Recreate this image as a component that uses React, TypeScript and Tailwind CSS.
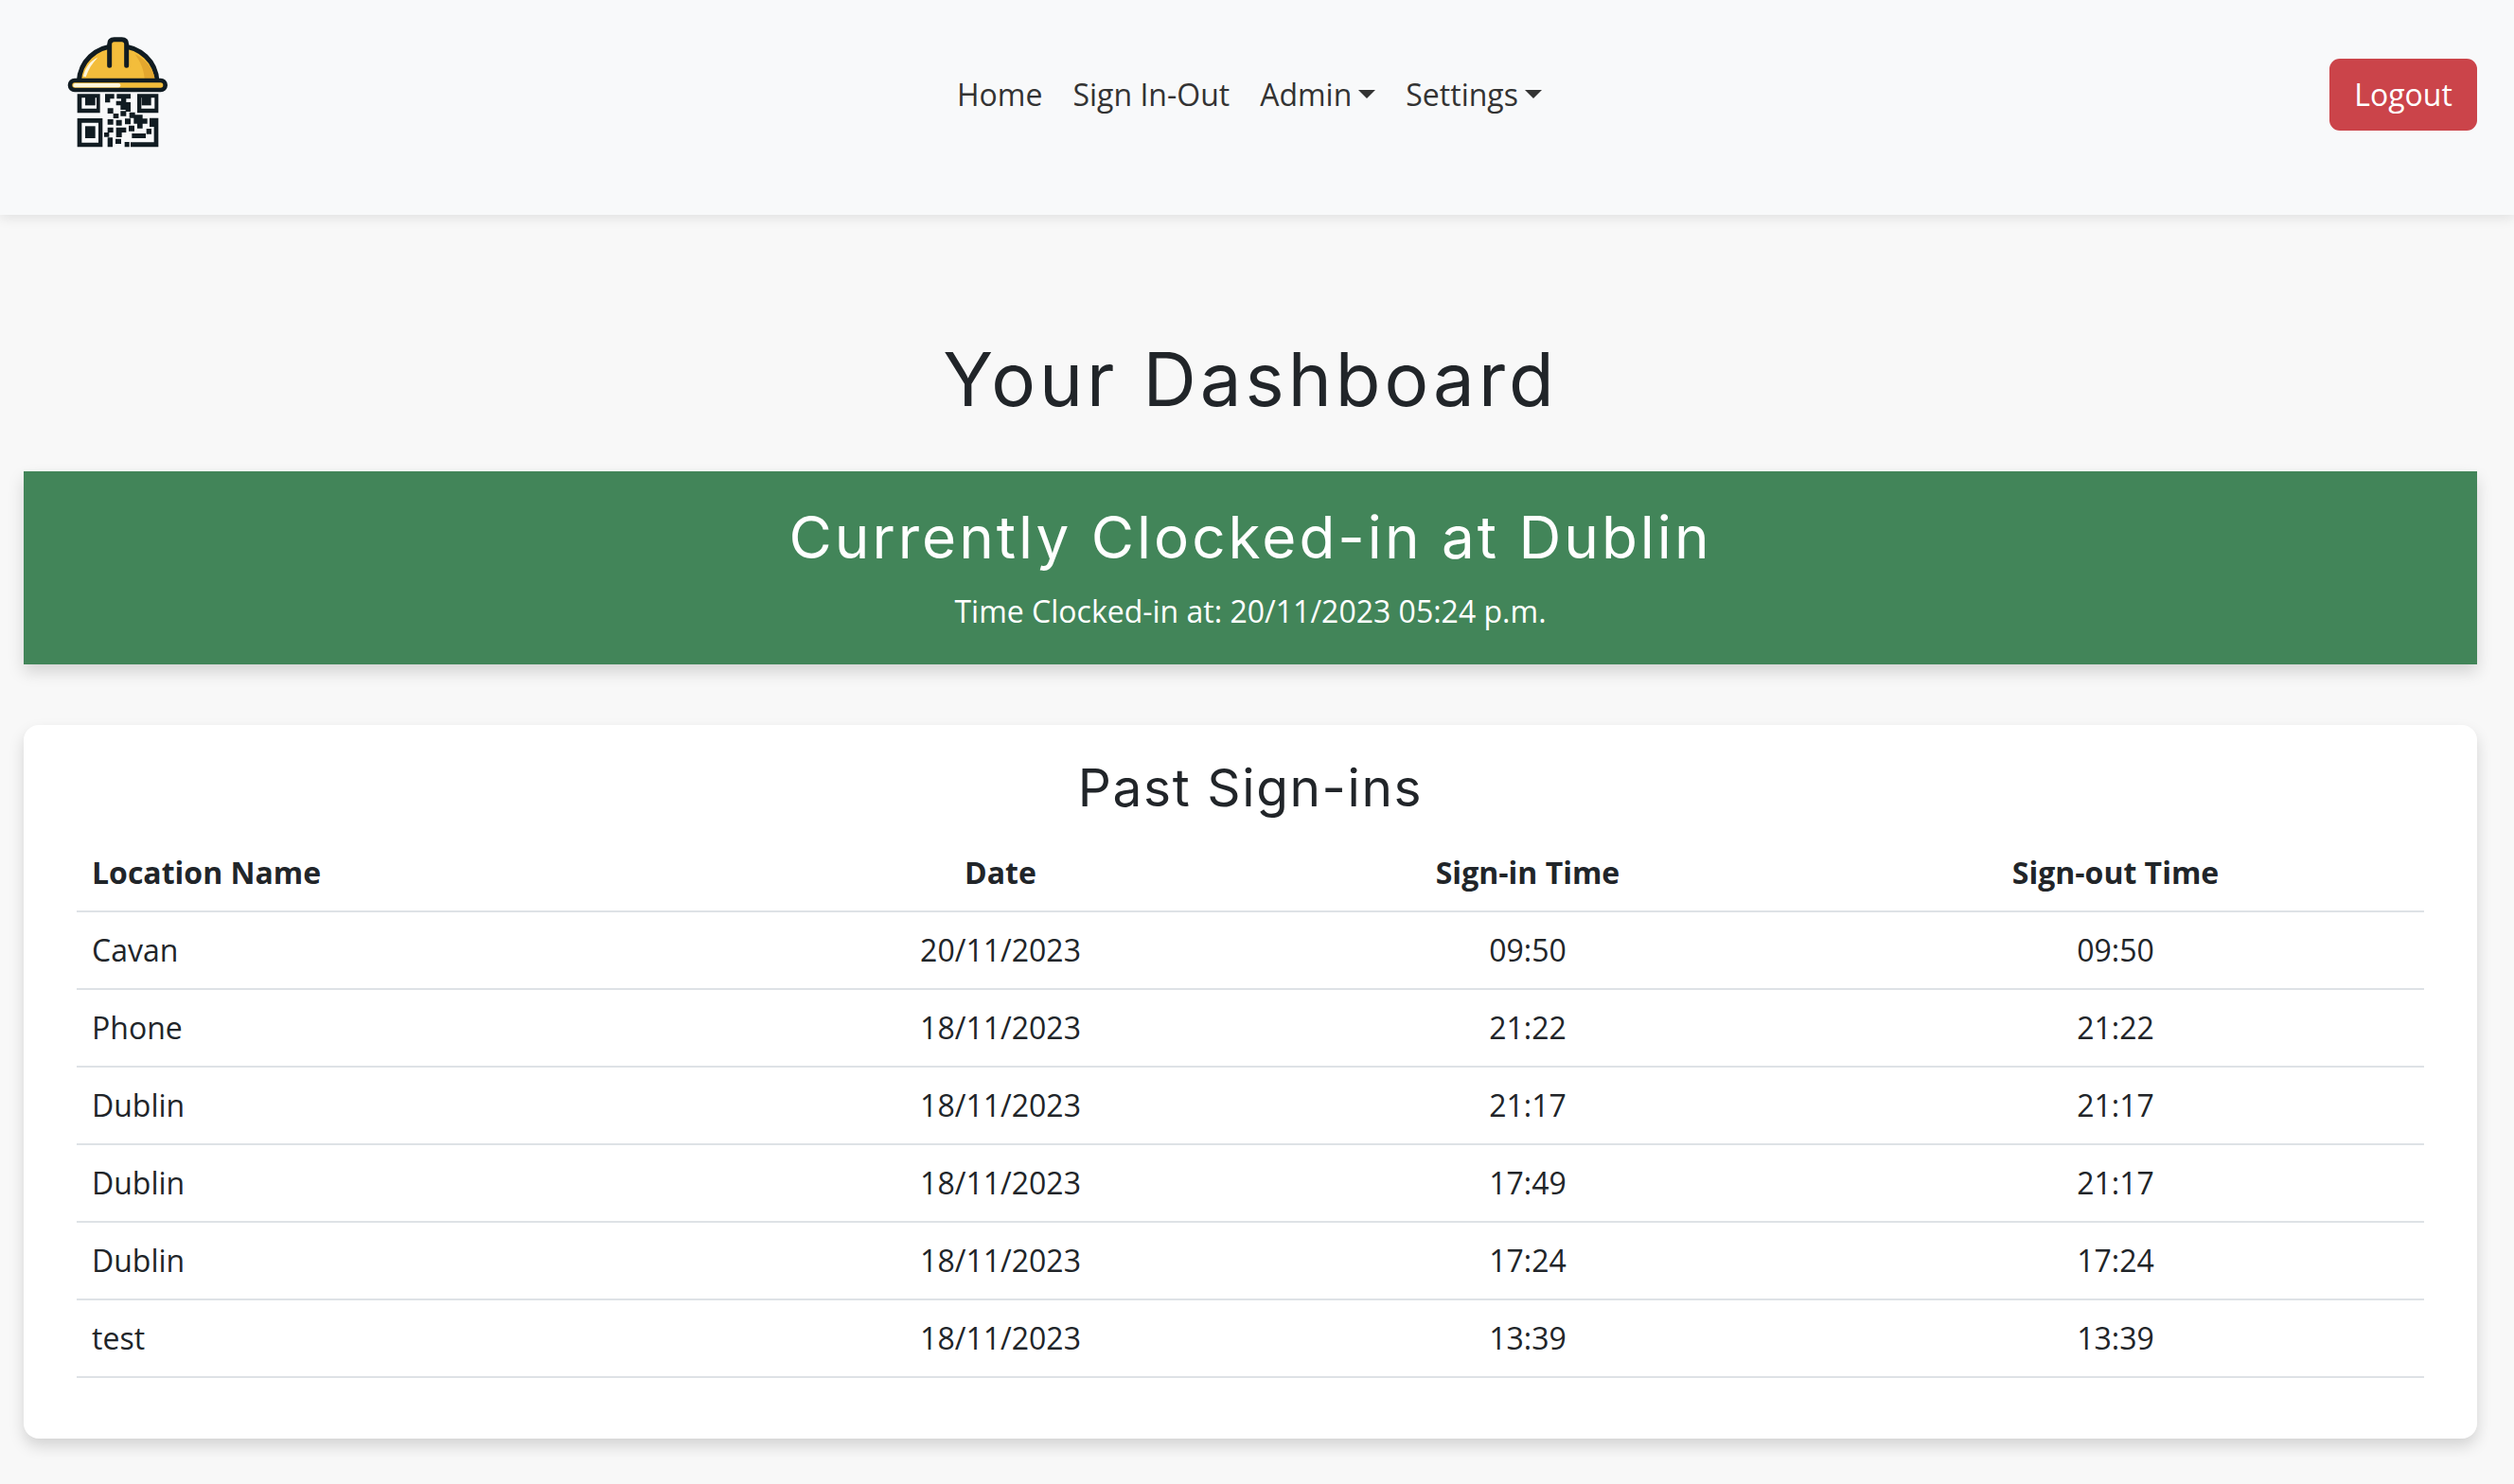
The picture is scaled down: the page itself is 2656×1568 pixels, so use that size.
const rows = [
  ["Cavan", "20/11/2023", "09:50", "09:50"],
  ["Phone", "18/11/2023", "21:22", "21:22"],
  ["Dublin", "18/11/2023", "21:17", "21:17"],
  ["Dublin", "18/11/2023", "17:49", "21:17"],
  ["Dublin", "18/11/2023", "17:24", "17:24"],
  ["test", "18/11/2023", "13:39", "13:39"],
];

function Logo() {
  return (
    <svg width="160" height="150" viewBox="0 0 480 450" className="block">
      {/* helmet */}
      <path d="M130 198 C134 135 180 88 254 84 C328 88 374 135 378 198 Z" fill="#f3bd3b" stroke="#111c22" strokeWidth="15" strokeLinejoin="round" />
      <path d="M308 112 C345 130 366 160 371 190 L338 190 C336 160 325 135 308 112 Z" fill="#e3a72e" />
      <path d="M144 182 C150 155 165 133 190 122 C172 140 160 160 152 184 Z" fill="#fdf6dc" />
      <path d="M227 148 V80 Q227 65 242 65 H266 Q281 65 281 80 V148" fill="#f3bd3b" stroke="#111c22" strokeWidth="15" strokeLinecap="round" strokeLinejoin="round" />
      <rect x="102" y="195" width="302" height="30" rx="15" fill="#f3bd3b" stroke="#111c22" strokeWidth="14" />
      <rect x="112" y="204" width="150" height="13" rx="6" fill="#fdf6dc" />
      {/* qr */}
      <path fillRule="evenodd" d="M125 238H197V298H125ZM139 250V284H186V250Z" fill="#111c22" />
      <rect x="150" y="244" width="32" height="30" fill="#111c22" />
      <path fillRule="evenodd" d="M315 238H382V298H315ZM328 250V284H370V250Z" fill="#111c22" />
      <rect x="329" y="244" width="30" height="30" fill="#111c22" />
      <path fillRule="evenodd" d="M125 315H205V406H125ZM139 329V392H192V329Z" fill="#111c22" />
      <rect x="150" y="340" width="32" height="38" fill="#111c22" />
      <path d="M213 238H242V253H229V265H213ZM250 238H294V253H280V264H294V294H278V288H262V274H248V260H264V253H250ZM221 283H239V300H221ZM239 300H256V315H239ZM262 292H280V308H262ZM290 296H308V314H290ZM304 304H332V316H347V332H332V347H315V332H304ZM354 314H382V406H294V391H368V342H354ZM221 318H239V335H221ZM248 320H266V338H248ZM276 316H294V334H276ZM221 344H239V360H221ZM248 344H280V360H266V375H248ZM288 338H306V356H288ZM221 376H237V406H221ZM246 380H264V396H246ZM275 390H290V406H275ZM298 363H342V378H298ZM344 348H360V365H344ZM210 360H226V374H210Z" fill="#111c22" />
    </svg>
  );
}

function Caret() {
  return <span className="ml-[7px] -mt-[2px] w-0 h-0 border-x-[9.5px] border-x-transparent border-t-[9.5px] border-t-[#333]" />;
}

export default function App() {
  return (
    <div className="min-h-[1568px] bg-[#f8f8f8] text-[#212529] text-[32px] leading-[48px] font-['Open_Sans',sans-serif]">
      <nav className="h-[227px] bg-[#f8f9fa] flex items-start justify-between pr-[39px] pl-[40px] shadow-[0_4px_12px_rgba(0,0,0,0.09)]">
        <div className="w-[160px] pt-[20px]">
          <Logo />
        </div>
        <ul className="flex items-center gap-[32px] mt-[76px] ml-[811px] text-[#333]">
          <li>Home</li>
          <li>Sign In-Out</li>
          <li className="flex items-center">Admin<Caret /></li>
          <li className="flex items-center">Settings<Caret /></li>
        </ul>
        <button className="ml-auto mt-[62px] w-[156px] h-[76px] rounded-[11px] bg-[#cb444a] text-white text-center">Logout</button>
      </nav>

      <main className="pl-[25px] pr-[39px]">
        <h1 className="mt-[132px] h-[84px] text-center text-[78px] leading-[84px] font-['Inter',sans-serif] font-normal tracking-[4px]">Your Dashboard</h1>

        <section className="mt-[55px] h-[204px] bg-[#428559] text-white text-center shadow-[0_8px_16px_rgba(0,0,0,0.15)] pt-[30px]">
          <h2 className="text-[62px] leading-[80px] font-['Inter',sans-serif] font-normal tracking-[3px]">Currently Clocked-in at Dublin</h2>
          <p className="mt-[14px]">Time Clocked-in at: 20/11/2023 05:24 p.m.</p>
        </section>

        <section className="mt-[64px] h-[754px] rounded-[16px] bg-white shadow-[0_8px_16px_rgba(0,0,0,0.15)] px-[56px] pt-[32px]">
          <h3 className="h-[68px] text-center text-[55px] leading-[68px] font-['Inter',sans-serif] font-normal tracking-[1.6px]">Past Sign-ins</h3>
          <table className="w-full table-fixed border-collapse mt-[15px]">
            <colgroup>
              <col className="w-[714px]" />
              <col className="w-[524px]" />
              <col className="w-[590px]" />
              <col className="w-[652px]" />
            </colgroup>
            <thead>
              <tr className="h-[82px] border-b-2 border-[#dee2e6] font-bold">
                <th className="text-left pl-[16px]">Location Name</th>
                <th>Date</th>
                <th>Sign-in Time</th>
                <th>Sign-out Time</th>
              </tr>
            </thead>
            <tbody>
              {rows.map((row, i) => (
                <tr key={i} className="h-[82px] border-b-2 border-[#dee2e6]">
                  <td className="pl-[16px]">{row[0]}</td>
                  <td className="text-center">{row[1]}</td>
                  <td className="text-center">{row[2]}</td>
                  <td className="text-center">{row[3]}</td>
                </tr>
              ))}
            </tbody>
          </table>
        </section>
      </main>
    </div>
  );
}
